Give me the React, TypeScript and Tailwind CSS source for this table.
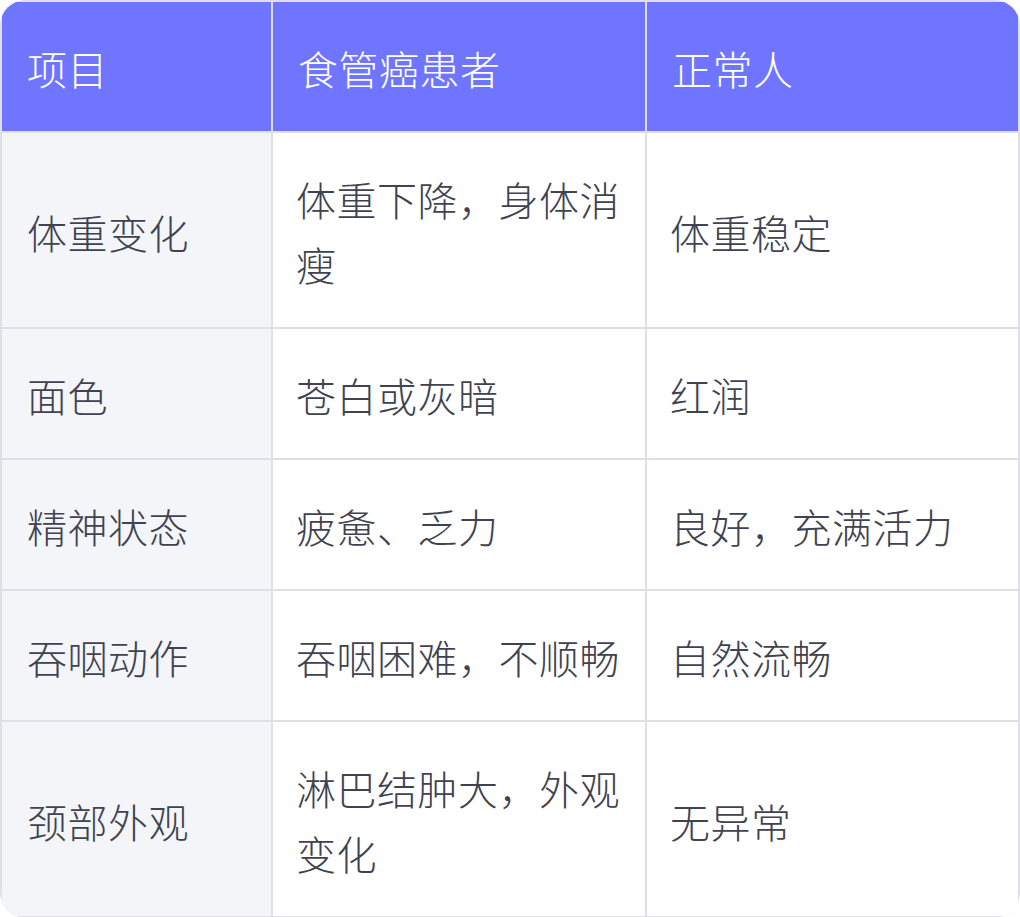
const HEAD = ["项目", "食管癌患者", "正常人"];

const ROWS = [
  ["体重变化", "体重下降，身体消瘦", "体重稳定"],
  ["面色", "苍白或灰暗", "红润"],
  ["精神状态", "疲惫、乏力", "良好，充满活力"],
  ["吞咽动作", "吞咽困难，不顺畅", "自然流畅"],
  ["颈部外观", "淋巴结肿大，外观变化", "无异常"],
];

export default function App() {
  return (
    <div
      className="w-[1020px] bg-white"
      style={{ fontFamily: '"Noto Sans CJK SC", "Noto Sans", sans-serif' }}
    >
      <div className="grid grid-cols-[269px_372px_371px] gap-[2px] overflow-hidden rounded-[26px] bg-[#dfdfe5] p-[2px] text-[40px] font-light leading-[65px] tracking-[0.5px]">
        {HEAD.map((h) => (
          <div key={h} className="flex items-center bg-[#7075ff] pt-[34px] pb-[30px] pl-[25px] pr-4 text-white">
            {h}
          </div>
        ))}
        {ROWS.map((row) =>
          row.map((cell, i) => (
            <div
              key={row[0] + i}
              className={
                i === 0
                  ? "flex items-center bg-[#f4f5f9] pt-[34px] pb-[30px] pl-[25px] pr-4 text-[#40434f]"
                  : "flex items-center bg-white pt-[34px] pb-[30px] pl-[23px] pr-4 text-[#40434f]"
              }
            >
              {cell}
            </div>
          ))
        )}
      </div>
    </div>
  );
}
